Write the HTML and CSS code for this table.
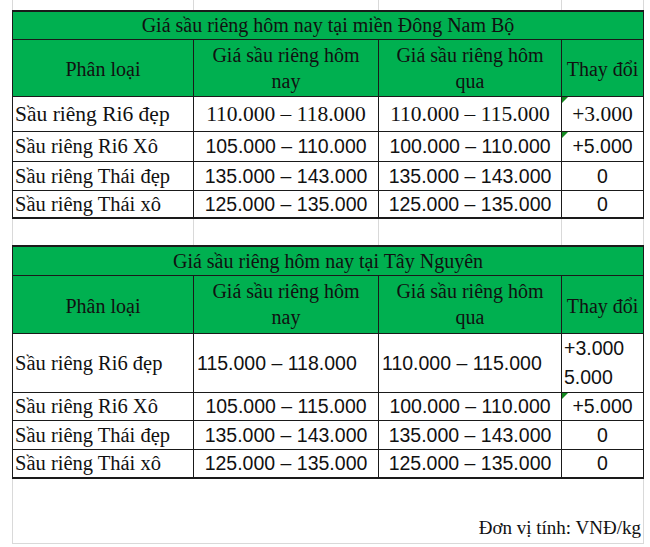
FILE: index.html
```html
<!DOCTYPE html>
<html lang="vi">
<head>
<meta charset="utf-8">
<link rel="stylesheet" href="styles.css">
</head>
<body>
<table class="sheet">
  <colgroup>
    <col class="c1"><col class="c2"><col class="c3"><col class="c4">
  </colgroup>
  <tr class="spacer"><td></td><td></td><td></td><td></td></tr>

  <tr class="title t1"><td colspan="4">Giá sầu riêng hôm nay tại miền Đông Nam Bộ</td></tr>
  <tr class="head h1"><td>Phân loại</td><td>Giá sầu riêng hôm<br>nay</td><td>Giá sầu riêng hôm<br>qua</td><td>Thay đổi</td></tr>
  <tr class="row r1 serif"><td class="name">Sầu riêng Ri6 đẹp</td><td class="num">110.000 – 118.000</td><td class="num">110.000 – 115.000</td><td class="num chg flag">+3.000</td></tr>
  <tr class="row r2"><td class="name">Sầu riêng Ri6 Xô</td><td class="num">105.000 – 110.000</td><td class="num">100.000 – 110.000</td><td class="num chg flag">+5.000</td></tr>
  <tr class="row r3"><td class="name">Sầu riêng Thái đẹp</td><td class="num">135.000 – 143.000</td><td class="num">135.000 – 143.000</td><td class="num chg">0</td></tr>
  <tr class="row r4 last"><td class="name">Sầu riêng Thái xô</td><td class="num">125.000 – 135.000</td><td class="num">125.000 – 135.000</td><td class="num chg">0</td></tr>

  <tr class="gap"><td></td><td></td><td></td><td></td></tr>

  <tr class="title t2"><td colspan="4">Giá sầu riêng hôm nay tại Tây Nguyên</td></tr>
  <tr class="head h2"><td>Phân loại</td><td>Giá sầu riêng hôm<br>nay</td><td>Giá sầu riêng hôm<br>qua</td><td>Thay đổi</td></tr>
  <tr class="row tall"><td class="name">Sầu riêng Ri6 đẹp</td><td class="num left">115.000 – 118.000</td><td class="num left">110.000 – 115.000</td><td class="num left two">+3.000<br>5.000</td></tr>
  <tr class="row r2b"><td class="name">Sầu riêng Ri6 Xô</td><td class="num">105.000 – 115.000</td><td class="num">100.000 – 110.000</td><td class="num chg flag">+5.000</td></tr>
  <tr class="row r3b"><td class="name">Sầu riêng Thái đẹp</td><td class="num">135.000 – 143.000</td><td class="num">135.000 – 143.000</td><td class="num chg">0</td></tr>
  <tr class="row r4b last"><td class="name">Sầu riêng Thái xô</td><td class="num">125.000 – 135.000</td><td class="num">125.000 – 135.000</td><td class="num chg">0</td></tr>

  <tr class="foot"><td colspan="4"><span class="unit">Đơn vị tính: VNĐ/kg</span></td></tr>
</table>
</body>
</html>
```

FILE: styles.css
```css
html, body {
  margin: 0;
  padding: 0;
  background: #ffffff;
}
body {
  padding-left: 12px;
  font-family: "Liberation Serif", "Times New Roman", serif;
  color: #111;
}
.sheet {
  border-collapse: collapse;
  table-layout: fixed;
  width: 631px;
}
.c1 { width: 181px; }
.c2 { width: 185px; }
.c3 { width: 183px; }
.c4 { width: 82px; }

.sheet td {
  padding: 0;
  overflow: hidden;
  white-space: nowrap;
  vertical-align: middle;
  line-height: 22px;
}

.spacer { height: 11px; }
.spacer td {
  border-left: 1px solid #d9d9d9;
  border-right: 1px solid #d9d9d9;
}

.title td {
  background: #00b050;
  border: 1px solid #1a1a1a;
  border-top: 2px solid #1a1a1a;
  text-align: center;
  font-size: 20px;
}
.title.t1 { height: 28px; }
.title.t2 { height: 29px; }

.head td {
  background: #00b050;
  border: 1px solid #1a1a1a;
  text-align: center;
  font-size: 20px;
  line-height: 26px;
}
.head td:first-child, .head td:last-child { padding-top: 3px; }
.head.h1 { height: 57px; }
.head.h2 { height: 58px; }

.row td {
  border: 1px solid #1a1a1a;
  font-family: "Liberation Sans", Arial, sans-serif;
  font-size: 19.5px;
  position: relative;
}
.row td.name {
  font-family: "Liberation Serif", "Times New Roman", serif;
  font-size: 20.5px;
  padding-left: 2px;
}
.row.serif td {
  font-family: "Liberation Serif", "Times New Roman", serif;
  font-size: 21.5px;
}
.row.r1 { height: 35px; }
.row.r2 { height: 30px; }
.row.r3 { height: 29px; }
.row.r4 { height: 28px; }
.row.tall { height: 57px; }
.row.r2b { height: 28px; }
.row.r3b { height: 29px; }
.row.r4b { height: 29px; }
.row.last td { border-bottom: 2px solid #1a1a1a; }

.num { text-align: center; }
.num.left { text-align: left; padding-left: 3px; }
.chg { text-align: center; }
.row.tall td.two { line-height: 29px; padding-left: 2px; }

.flag::before {
  content: "";
  position: absolute;
  left: 0;
  top: 0;
  width: 0;
  height: 0;
  border-top: 6px solid #12891f;
  border-right: 6px solid transparent;
}

.gap { height: 28px; }
.gap td {
  border-left: 1px solid #d9d9d9;
  border-right: 1px solid #d9d9d9;
}

.foot { height: 65px; }
.foot td {
  border-left: 1px solid #d9d9d9;
  border-right: 1px solid #d9d9d9;
  border-bottom: 1px solid #d9d9d9;
  vertical-align: bottom;
  text-align: right;
  font-size: 19px;
  line-height: 24px;
  padding-right: 2px;
  padding-bottom: 3px;
}
```
